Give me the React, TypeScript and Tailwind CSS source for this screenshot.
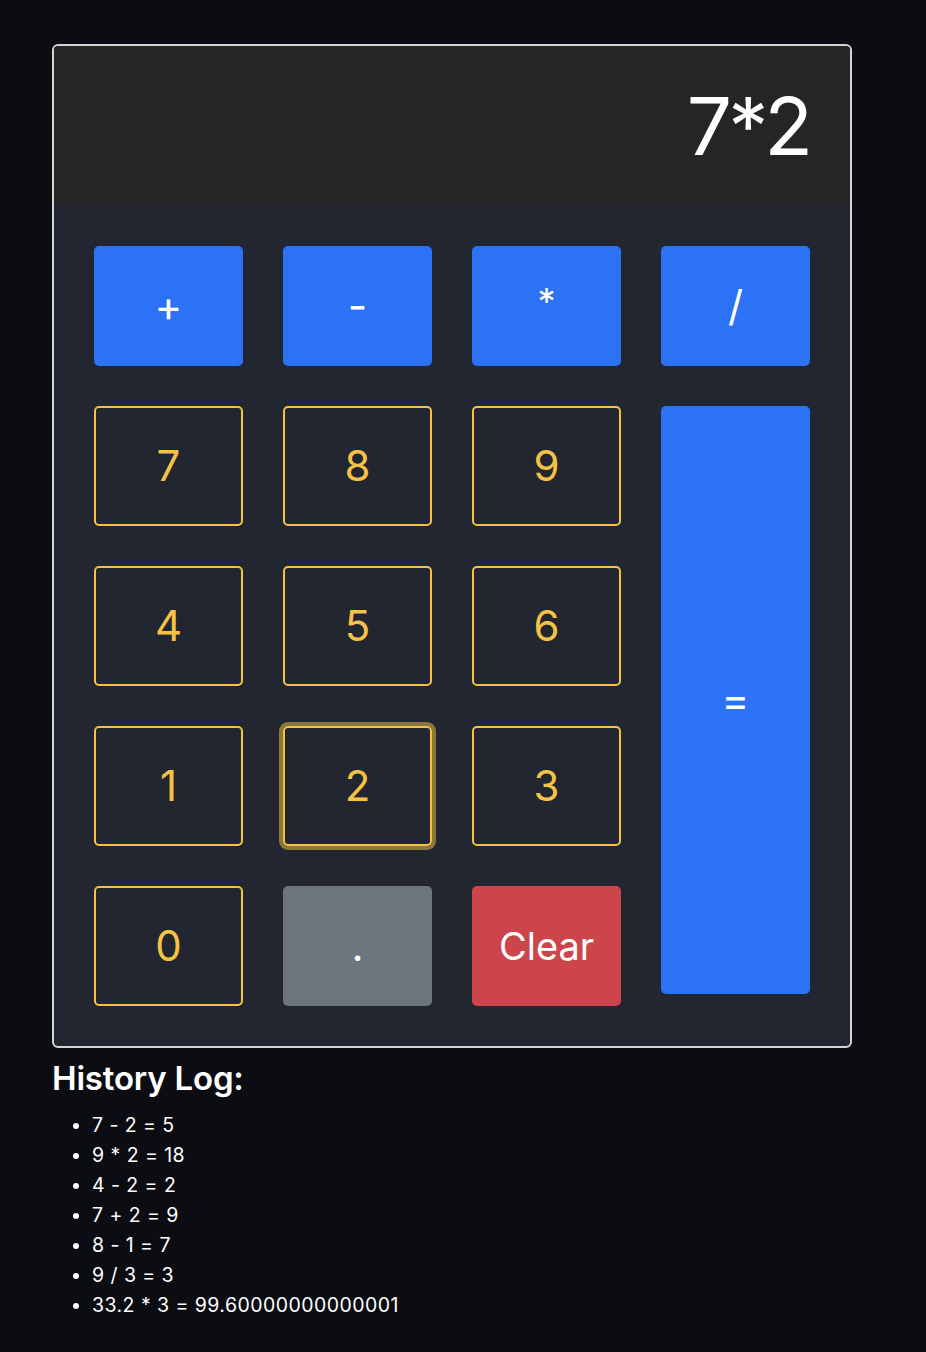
import React from "react";

const history = [
  "7 - 2 = 5",
  "9 * 2 = 18",
  "4 - 2 = 2",
  "7 + 2 = 9",
  "8 - 1 = 7",
  "9 / 3 = 3",
  "33.2 * 3 = 99.60000000000001",
];

const opBtn =
  "flex h-[120px] items-center justify-center rounded-[5px] bg-[#2b72f4] text-[42px] leading-none text-white";
const numBtn =
  "flex h-[120px] items-center justify-center rounded-[5px] border-2 border-[#f5c243] text-[42px] leading-none text-[#f5c243]";

export default function App() {
  return (
    <div
      className="min-h-[1352px] bg-[#0b0d12] pl-[52px] pt-[44px] text-white [font-feature-settings:'calt'_0]"
      style={{ fontFamily: "Inter, 'Noto Sans', sans-serif" }}
    >
      <div className="w-[800px] overflow-hidden rounded-[6px] border-2 border-[#d4d4d4] bg-[#212631]">
        <div className="flex h-[159px] items-center justify-end bg-[#252525] pr-[41px]">
          <span className="text-[80px] leading-none tracking-[-4px]">7*2</span>
        </div>

        <div className="grid grid-cols-4 gap-10 pb-10 pl-10 pr-10 pt-[41px]">
          <button className={opBtn}>+</button>
          <button className={opBtn}>-</button>
          <button className={opBtn}>
            <span className="-mt-[10px] text-[36px]">*</span>
          </button>
          <button className={opBtn}>/</button>

          <button className={numBtn}>7</button>
          <button className={numBtn}>8</button>
          <button className={numBtn}>9</button>
          <button className={`${opBtn} row-span-4 h-[588px] self-start`}>=</button>

          <button className={numBtn}>4</button>
          <button className={numBtn}>5</button>
          <button className={numBtn}>6</button>

          <button className={numBtn}>1</button>
          <button className={`${numBtn} shadow-[0_0_0_4px_#8b773a]`}>2</button>
          <button className={numBtn}>3</button>

          <button className={numBtn}>0</button>
          <button className="flex h-[120px] items-center justify-center rounded-[5px] bg-[#6c757d] text-[42px] leading-none text-white">
            .
          </button>
          <button className="flex h-[120px] items-center justify-center rounded-[5px] bg-[#cc454b] text-[38px] leading-none text-white">
            Clear
          </button>
        </div>
      </div>

      <h2 className="mt-[11px] text-[33px] font-semibold leading-[1.2] tracking-[-0.2px]">History Log:</h2>
      <ul className="mt-[11px] list-disc pl-10 text-[19.5px] leading-[30px] tracking-[0.45px]">
        {history.map((h) => (
          <li key={h}>{h}</li>
        ))}
      </ul>
    </div>
  );
}
